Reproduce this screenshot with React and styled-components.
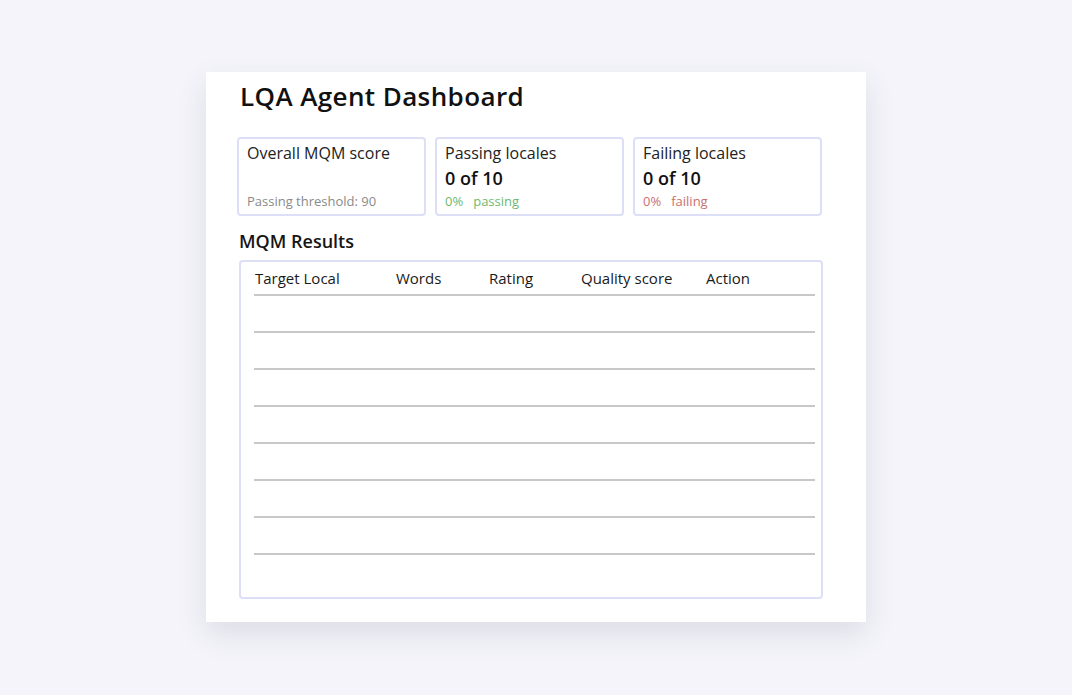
import React from 'react';
import styled, { createGlobalStyle } from 'styled-components';

const GlobalStyle = createGlobalStyle`
  html, body {
    margin: 0;
    padding: 0;
    background: #f4f4fa;
    font-family: "Open Sans", "Liberation Sans", sans-serif;
    color: #151515;
  }
`;

const Page = styled.div`
  height: 100vh;
  box-sizing: border-box;
  padding-top: 72px;
  display: flex;
  justify-content: center;
`;

const Board = styled.div`
  width: 660px;
  height: 550px;
  box-sizing: border-box;
  padding: 8px 43px 0 31px;
  background: #ffffff;
  box-shadow: 0 12px 28px rgba(60, 60, 90, 0.12);
`;

const Title = styled.h1`
  margin: 0 0 0 3px;
  font-size: 26px;
  line-height: 32px;
  font-weight: 600;
  letter-spacing: 0.4px;
  color: #111;
`;

const StatRow = styled.div`
  display: grid;
  grid-template-columns: repeat(3, 189px);
  gap: 9px;
  margin-top: 25px;
`;

const StatCard = styled.div`
  height: 79px;
  box-sizing: border-box;
  border: 2px solid #dcdff6;
  border-radius: 4px;
  padding: 4px 8px;
  display: flex;
  flex-direction: column;
`;

const StatLabel = styled.div`
  font-size: 16px;
  line-height: 20px;
  color: #222;
`;

const StatValue = styled.div`
  font-size: 18px;
  line-height: 26px;
  font-weight: 600;
  margin-top: 2px;
  color: #111;
`;

const StatNote = styled.div`
  margin-top: auto;
  font-size: 13px;
  line-height: 18px;
  color: ${p => p.tone === 'good' ? '#6fb86f' : p.tone === 'bad' ? '#c97070' : '#8a8a8a'};

  span + span {
    margin-left: 10px;
  }
`;

const SectionTitle = styled.h2`
  margin: 13px 0 0 2px;
  font-size: 18px;
  line-height: 24px;
  font-weight: 600;
`;

const TableBox = styled.div`
  margin: 7px 0 0 2px;
  height: 339px;
  box-sizing: border-box;
  border: 2px solid #dcdff6;
  border-radius: 4px;
  padding: 0 6px 0 13px;
`;

const Row = styled.div`
  display: grid;
  grid-template-columns: 141px 93px 92px 125px 1fr;
  align-items: center;
  height: ${p => p.head ? '32px' : '35px'};
  border-bottom: ${p => p.last ? 'none' : '2px solid #c8c8c8'};
  font-size: 15px;
  color: #1a1a1a;
`;

const Cell = styled.div`
  padding-left: 1px;
`;

const columns = ['Target Local', 'Words', 'Rating', 'Quality score', 'Action'];

const stats = [
  { label: 'Overall MQM score', value: '', note: ['Passing threshold: 90'], tone: 'muted' },
  { label: 'Passing locales', value: '0 of 10', note: ['0%', 'passing'], tone: 'good' },
  { label: 'Failing locales', value: '0 of 10', note: ['0%', 'failing'], tone: 'bad' },
];

export default function App() {
  const rows = Array.from({ length: 8 });
  return (
    <Page>
      <GlobalStyle />
      <Board>
        <Title>LQA Agent Dashboard</Title>
        <StatRow>
          {stats.map(s => (
            <StatCard key={s.label}>
              <StatLabel>{s.label}</StatLabel>
              {s.value && <StatValue>{s.value}</StatValue>}
              <StatNote tone={s.tone}>
                {s.note.map(n => <span key={n}>{n}</span>)}
              </StatNote>
            </StatCard>
          ))}
        </StatRow>
        <SectionTitle>MQM Results</SectionTitle>
        <TableBox>
          <Row head>
            {columns.map(c => <Cell key={c}>{c}</Cell>)}
          </Row>
          {rows.map((_, i) => (
            <Row key={i} last={i === rows.length - 1}>
              {columns.map(c => <Cell key={c} />)}
            </Row>
          ))}
        </TableBox>
      </Board>
    </Page>
  );
}
